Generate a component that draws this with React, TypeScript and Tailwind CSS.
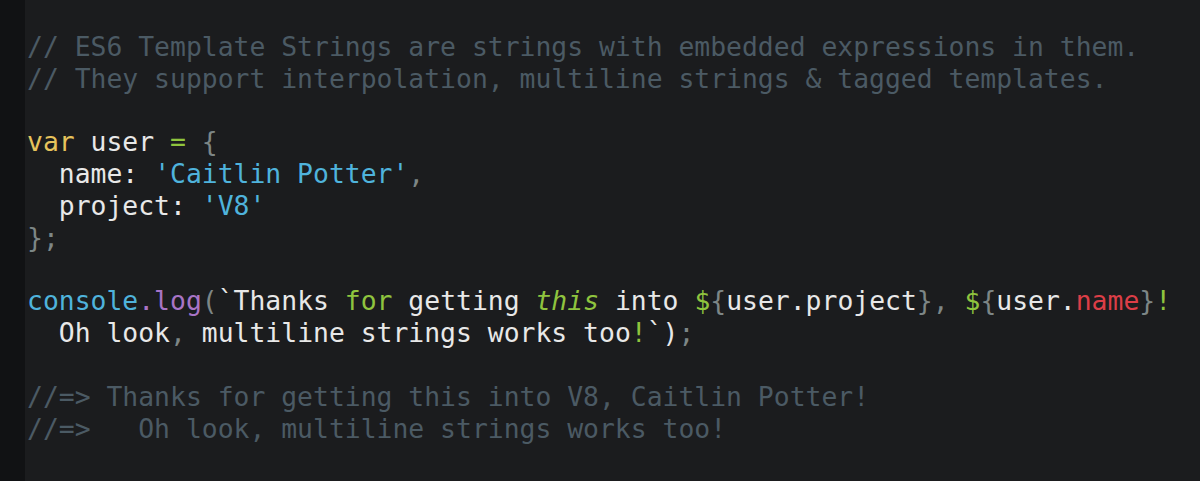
const C = 'text-[#4b5a64]'
const W = 'text-[#e8e8e8]'
const G = 'text-[#7d8686]'
const Y = 'text-[#e6c35c]'
const B = 'text-[#4fb3dc]'
const P = 'text-[#a874c6]'
const GR = 'text-[#8fc43e]'
const R = 'text-[#dc3e47]'

function Line({ children }: { children?: React.ReactNode }) {
  return <div className="h-[31.8px] leading-[31.8px]">{children ?? ' '}</div>
}

export default function App() {
  return (
    <div className="flex h-[481px] w-[1200px] overflow-hidden bg-[#1b1c1e]">
      <div className="w-[25px] shrink-0 bg-[#111214]" />
      <pre
        className={`pt-[31px] pl-[2px] text-[26.4px] ${W}`}
        style={{ fontFamily: '"DejaVu Sans Mono", "Liberation Mono", monospace' }}
      >
        <Line>
          <span className={C}>// ES6 Template Strings are strings with embedded expressions in them.</span>
        </Line>
        <Line>
          <span className={C}>// They support interpolation, multiline strings &amp; tagged templates.</span>
        </Line>
        <Line />
        <Line>
          <span className={Y}>var</span> user <span className={GR}>=</span> <span className={G}>{'{'}</span>
        </Line>
        <Line>
          {'  '}name: <span className={B}>'Caitlin Potter'</span>
          <span className={G}>,</span>
        </Line>
        <Line>
          {'  '}project: <span className={B}>'V8'</span>
        </Line>
        <Line>
          <span className={G}>{'};'}</span>
        </Line>
        <Line />
        <Line>
          <span className={B}>console</span>
          <span className={P}>.log</span>
          <span className={G}>(</span>`Thanks <span className={GR}>for</span> getting{' '}
          <span className={`${GR} italic`}>this</span> into <span className={GR}>$</span>
          <span className={G}>{'{'}</span>user.project<span className={G}>{'},'}</span>{' '}
          <span className={GR}>$</span>
          <span className={G}>{'{'}</span>user.<span className={R}>name</span>
          <span className={G}>{'}'}</span>
          <span className={GR}>!</span>
        </Line>
        <Line>
          {'  '}Oh look<span className={G}>,</span> multiline strings works too<span className={GR}>!</span>`)
          <span className={G}>;</span>
        </Line>
        <Line />
        <Line>
          <span className={C}>//=&gt; Thanks for getting this into V8, Caitlin Potter!</span>
        </Line>
        <Line>
          <span className={C}>//=&gt;   Oh look, multiline strings works too!</span>
        </Line>
      </pre>
    </div>
  )
}
